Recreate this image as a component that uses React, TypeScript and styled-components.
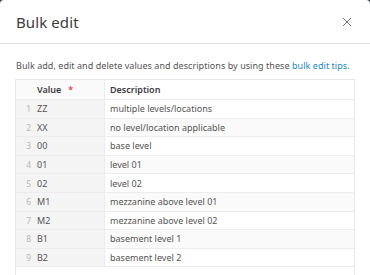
import React from "react";
import styled, { createGlobalStyle } from "styled-components";

const Global = createGlobalStyle`
  html, body { margin: 0; padding: 0; background: #3a3f45; overflow: hidden; }
  body { font-family: "Noto Sans", "Open Sans", sans-serif; }
`;

const Dialog = styled.div`
  width: 370px;
  height: 275px;
  background: #fff;
  border-radius: 4px 4px 0 0;
  overflow: hidden;
  display: flex;
  flex-direction: column;
`;

const Header = styled.div`
  flex-shrink: 0;
  height: 44px;
  box-sizing: border-box;
  display: flex;
  align-items: center;
  justify-content: space-between;
  padding: 0 17px 0 16px;
  border-bottom: 1px solid #e4e4e4;
`;

const Title = styled.h1`
  margin: 0;
  font-size: 15px;
  font-weight: 400;
  color: #3c3c3c;
  letter-spacing: 0.1px;
`;

const Close = styled.button`
  border: 0;
  background: none;
  padding: 0;
  width: 12px;
  height: 12px;
  display: flex;
  align-items: center;
  justify-content: center;
  color: #666;
`;

const Body = styled.div`
  flex-shrink: 0;
  padding: 15px 15px 0 15px;
  display: flex;
  flex-direction: column;
  gap: 7px;
`;

const Intro = styled.p`
  margin: 0;
  font-size: 9px;
  color: #555;
  line-height: 13px;
  padding-left: 1px;
  letter-spacing: 0.05px;
`;

const Link = styled.a`
  color: #1b89c4;
  text-decoration: none;
`;

const Table = styled.div`
  border: 1px solid #e8e8e8;
  min-height: 240px;
  display: flex;
  flex-direction: column;
`;

const Row = styled.div<{ $head?: boolean; $alt?: boolean }>`
  display: grid;
  grid-template-columns: 89px 1fr;
  height: ${(p) => (p.$head ? "20px" : "18.6px")};
  font-size: 9px;
  color: ${(p) => (p.$head ? "#3c3c3c" : "#555")};
  font-weight: ${(p) => (p.$head ? 600 : 400)};
  border-bottom: 1px solid #ededed;
  box-sizing: border-box;
  background: ${(p) => (p.$alt ? "#fafafa" : "#fff")};
`;

const Left = styled.div<{ $head?: boolean }>`
  display: flex;
  align-items: center;
  background: ${(p) => (p.$head ? "#fafafa" : "#f4f4f4")};
  border-right: 1px solid #ececec;
`;

const Num = styled.span`
  width: 21px;
  box-sizing: border-box;
  text-align: right;
  padding-right: 6px;
  color: #b8b8b8;
  font-size: 8.5px;
`;

const Cell = styled.div`
  display: flex;
  align-items: center;
  padding-left: 5px;
`;

const Star = styled.span`
  color: #e0403a;
  margin-left: 7px;
`;

const rows = [
  ["ZZ", "multiple levels/locations"],
  ["XX", "no level/location applicable"],
  ["00", "base level"],
  ["01", "level 01"],
  ["02", "level 02"],
  ["M1", "mezzanine above level 01"],
  ["M2", "mezzanine above level 02"],
  ["B1", "basement level 1"],
  ["B2", "basement level 2"],
];

export default function App() {
  return (
    <>
      <Global />
      <Dialog>
        <Header>
          <Title>Bulk edit</Title>
          <Close aria-label="Close">
            <svg width="10" height="10" viewBox="0 0 10 10">
              <path d="M1 1L9 9M9 1L1 9" stroke="#707070" strokeWidth="1" />
            </svg>
          </Close>
        </Header>
        <Body>
          <Intro>
            Bulk add, edit and delete values and descriptions by using these{" "}
            <Link href="#">bulk edit tips</Link>.
          </Intro>
          <Table>
            <Row $head>
              <Left $head>
                <Num />
                <span>Value</span>
                <Star>*</Star>
              </Left>
              <Cell>Description</Cell>
            </Row>
            {rows.map(([v, d], i) => (
              <Row key={v} $alt={i % 2 === 1}>
                <Left>
                  <Num>{i + 1}</Num>
                  <span>{v}</span>
                </Left>
                <Cell>{d}</Cell>
              </Row>
            ))}
          </Table>
        </Body>
      </Dialog>
    </>
  );
}
